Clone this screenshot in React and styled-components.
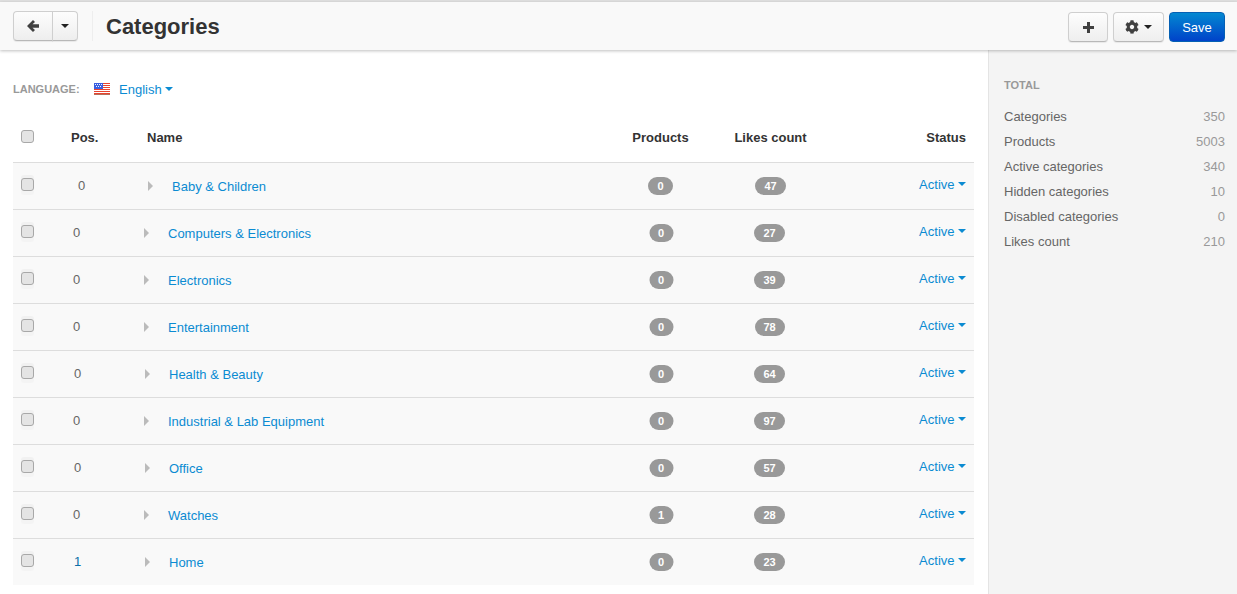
import React from "react";
import styled, { createGlobalStyle } from "styled-components";
import { FaCog } from "react-icons/fa";

const GlobalStyle = createGlobalStyle`
  html, body {
    margin: 0;
    height: 100%;
    overflow: hidden;
    background: #fff;
    font-family: "Liberation Sans", Arial, sans-serif;
    font-size: 13px;
    color: #333;
  }
`;

const Page = styled.div`
  display: flex;
  flex-direction: column;
  height: 594px;
  border-top: 2px solid #e0e0e0;
  box-sizing: border-box;
`;

const Toolbar = styled.header`
  position: relative;
  z-index: 1;
  flex: none;
  display: flex;
  align-items: center;
  height: 48px;
  box-sizing: border-box;
  padding: 0 12px 0 13px;
  background: #f9f9f9;
  box-shadow: 0 1px 3px rgba(0, 0, 0, 0.25);
`;

const BtnGroup = styled.div`
  display: flex;
`;

const Actions = styled.div`
  display: flex;
  margin-top: 2px;
`;

const Btn = styled.button`
  display: flex;
  align-items: center;
  justify-content: center;
  gap: ${({ $iconGap }) => $iconGap || 0}px;
  box-sizing: border-box;
  width: ${({ $width }) => $width}px;
  height: 30px;
  margin-left: ${({ $gap }) => $gap || 0}px;
  padding: 0;
  border: 1px solid #cfcfcf;
  border-bottom-color: #b8b8b8;
  border-radius: ${({ $radius }) => $radius || "4px"};
  background: linear-gradient(to bottom, #fdfdfd, #eeeeee);
  box-shadow: 0 1px 1px rgba(0, 0, 0, 0.07);
  color: #404040;
`;

const SaveBtn = styled.button`
  box-sizing: border-box;
  width: 56px;
  height: 30px;
  margin-left: 5px;
  padding: 0;
  border: 1px solid #0560b4;
  border-radius: 4px;
  background: linear-gradient(to bottom, #0388d1, #0042c9);
  color: #fff;
  font: 13px "Liberation Sans", Arial, sans-serif;
`;

const Caret = styled.span`
  display: inline-block;
  width: 0;
  height: 0;
  border-left: 4px solid transparent;
  border-right: 4px solid transparent;
  border-top: 4px solid ${({ $color }) => $color || "#222"};
`;

const TitleWrap = styled.div`
  flex: 1;
  margin-left: 14px;
  padding-left: 13px;
  border-left: 1px solid #eeeeee;
  height: 30px;
  display: flex;
  align-items: center;
`;

const Title = styled.h1`
  margin: 2px 0 0;
  font-size: 22px;
  font-weight: 700;
  color: #333;
`;

const Body = styled.div`
  flex: 1;
  display: flex;
  min-height: 0;
`;

const Main = styled.main`
  flex: 1;
  min-width: 0;
  padding: 0 14px 0 13px;
`;

const LangBar = styled.div`
  display: flex;
  align-items: center;
  height: 18px;
  margin-top: 30px;
`;

const LangLabel = styled.span`
  width: 81px;
  font-size: 11px;
  font-weight: 700;
  color: #999;
`;

const LangLink = styled.a`
  display: flex;
  align-items: center;
  color: #0b8bd2;
`;

const FlagIcon = styled.svg`
  margin-right: 9px;
`;

const CaretGap = styled.span`
  display: flex;
  margin-left: 3px;
`;

const Table = styled.div`
  margin-top: 16px;
`;

const grid = `
  display: grid;
  grid-template-columns: 50px 72px 485px 81px 139px 134px;
  box-sizing: border-box;
`;

const HeadRow = styled.div`
  ${grid}
  height: 49px;
  padding-bottom: 2px;
  align-items: center;
  border-bottom: 1px solid #ddd;
  font-weight: 700;
  color: #333;
`;

const Row = styled.div`
  ${grid}
  height: ${({ $last }) => ($last ? 46 : 47)}px;
  align-items: center;
  background: #f9f9f9;
  border-bottom: ${({ $last }) => ($last ? "none" : "1px solid #ddd")};
`;

const CheckCell = styled.div`
  display: flex;
  padding-left: 8px;
`;

const Check = styled.input.attrs({ type: "checkbox" })`
  appearance: none;
  box-sizing: border-box;
  width: 13px;
  height: 13px;
  margin: 0 0 ${({ $halo }) => ($halo ? 3 : 1)}px;
  border: 1px solid #a8a8a8;
  border-radius: 3px;
  background: #e4e4e4;
  box-shadow: ${({ $halo }) => ($halo ? "0 -3px 0 #f1f1f1, 0 4px 0 #f4f4f4" : "none")};
`;

const HeadPos = styled.div`
  padding-left: 8px;
`;

const PosCell = styled.div`
  padding-left: ${({ $pad }) => $pad}px;
  padding-bottom: 1px;
  color: #666;
`;

const PosLink = styled.a`
  color: #0b6fa8;
`;

const HeadName = styled.div`
  padding-left: 12px;
`;

const NameCell = styled.div`
  display: flex;
  align-items: center;
  padding-left: ${({ $pad }) => $pad}px;
  padding-top: 1px;
`;

const Arrow = styled.span`
  width: 0;
  height: 0;
  margin-right: 19px;
  margin-bottom: 1px;
  border-top: 5px solid transparent;
  border-bottom: 5px solid transparent;
  border-left: 5px solid #bbb;
`;

const NameLink = styled.a`
  color: #0b8bd2;
`;

const Center = styled.div`
  display: flex;
  justify-content: center;
`;

const Badge = styled.span`
  box-sizing: border-box;
  width: ${({ $width }) => $width}px;
  height: 18px;
  line-height: 18px;
  border-radius: 9px;
  background: #999;
  color: #fff;
  font-size: 11px;
  font-weight: 700;
  text-align: center;
  transform: translateX(${({ $shift }) => $shift || 0}px);
`;

const HeadStatus = styled.div`
  padding-right: 8px;
  text-align: right;
`;

const StatusCell = styled.div`
  display: flex;
  align-items: center;
  justify-content: flex-end;
  gap: 3.5px;
  padding: 0 8px 4px 0;
  color: #0b8bd2;
`;

const Sidebar = styled.aside`
  flex: none;
  width: 249px;
  box-sizing: border-box;
  padding: 29px 12px 0 15px;
  background: #f4f4f4;
  border-left: 1px solid #e4e4e4;
`;

const SideTitle = styled.h4`
  margin: 0 0 12px;
  font-size: 11px;
  line-height: 13px;
  font-weight: 700;
  color: #999;
`;

const Stat = styled.div`
  display: flex;
  justify-content: space-between;
  height: 25px;
  line-height: 25px;
  color: #666;
`;

const StatValue = styled.span`
  color: #999;
`;

const rows = [
  { name: "Baby & Children", pos: "0", posPad: 15, arrowPad: 13, products: "0", likes: "47", pWidth: 25, pShift: 0, lWidth: 31, lShift: 0 },
  { name: "Computers & Electronics", pos: "0", posPad: 10, arrowPad: 9, products: "0", likes: "27", pWidth: 24, pShift: 0.5, lWidth: 31, lShift: -1 },
  { name: "Electronics", pos: "0", posPad: 10, arrowPad: 9, products: "0", likes: "39", pWidth: 24, pShift: 0.5, lWidth: 31, lShift: -1 },
  { name: "Entertainment", pos: "0", posPad: 10, arrowPad: 9, products: "0", likes: "78", pWidth: 24, pShift: 0.5, lWidth: 30, lShift: -1 },
  { name: "Health & Beauty", pos: "0", posPad: 11, arrowPad: 10, products: "0", likes: "64", pWidth: 24, pShift: 0.5, lWidth: 31, lShift: -1 },
  { name: "Industrial & Lab Equipment", pos: "0", posPad: 10, arrowPad: 9, products: "0", likes: "97", pWidth: 24, pShift: 0.5, lWidth: 31, lShift: -1 },
  { name: "Office", pos: "0", posPad: 11, arrowPad: 10, products: "0", likes: "57", pWidth: 24, pShift: 0.5, lWidth: 31, lShift: -1 },
  { name: "Watches", pos: "0", posPad: 10, arrowPad: 9, products: "1", likes: "28", pWidth: 24, pShift: 0.5, lWidth: 31, lShift: -1 },
  { name: "Home", pos: "1", posPad: 11, arrowPad: 10, products: "0", likes: "23", pWidth: 24, pShift: 0.5, lWidth: 31, lShift: -1, link: true },
];

const stats = [
  ["Categories", "350"],
  ["Products", "5003"],
  ["Active categories", "340"],
  ["Hidden categories", "10"],
  ["Disabled categories", "0"],
  ["Likes count", "210"],
];

const BackIcon = () => (
  <svg width="12" height="12" viewBox="0 0 12 12" fill="#404040">
    <polygon points="0,6 6,0 8,2 5.5,4.3 12,4.3 12,7.7 5.5,7.7 8,10 6,12" />
  </svg>
);

const PlusIcon = () => (
  <svg width="11" height="11" viewBox="0 0 11 11" fill="#404040">
    <polygon points="4,0 7,0 7,4 11,4 11,7 7,7 7,11 4,11 4,7 0,7 0,4 4,4" />
  </svg>
);

const UsFlag = () => (
  <FlagIcon width="16" height="12" viewBox="0 0 16 12">
    <rect width="16" height="12" fill="#fff" />
    {[0, 2, 4, 6, 8, 10].map((y) => (
      <rect key={y} y={y} width="16" height="1" fill="#e8432f" />
    ))}
    <rect y="11" width="16" height="1" fill="#b8705a" />
    <rect width="9" height="6" fill="#3a5fe0" />
    {[1, 3, 5, 7].map((x) => (
      <rect key={x} x={x} y="1" width="1" height="1" fill="#f0f4ff" />
    ))}
    {[2, 4, 6].map((x) => (
      <rect key={x} x={x} y="3" width="1" height="1" fill="#f0f4ff" />
    ))}
  </FlagIcon>
);

const App = () => (
  <>
    <GlobalStyle />
    <Page>
      <Toolbar>
        <BtnGroup>
          <Btn $width={40} $radius="4px 0 0 4px"><BackIcon /></Btn>
          <Btn $width={26} $gap={-1} $radius="0 4px 4px 0"><Caret /></Btn>
        </BtnGroup>
        <TitleWrap><Title>Categories</Title></TitleWrap>
        <Actions>
          <Btn $width={40}><PlusIcon /></Btn>
          <Btn $width={51} $gap={5} $iconGap={5}><FaCog size={14} /><Caret /></Btn>
          <SaveBtn>Save</SaveBtn>
        </Actions>
      </Toolbar>
      <Body>
        <Main>
          <LangBar>
            <LangLabel>LANGUAGE:</LangLabel>
            <LangLink>
              <UsFlag />
              English
              <CaretGap><Caret $color="#0b8bd2" /></CaretGap>
            </LangLink>
          </LangBar>
          <Table>
            <HeadRow>
              <CheckCell><Check /></CheckCell>
              <HeadPos>Pos.</HeadPos>
              <HeadName>Name</HeadName>
              <Center>Products</Center>
              <Center>Likes count</Center>
              <HeadStatus>Status</HeadStatus>
            </HeadRow>
            {rows.map((r, i) => (
              <Row key={r.name} $last={i === rows.length - 1}>
                <CheckCell><Check $halo /></CheckCell>
                <PosCell $pad={r.posPad}>{r.link ? <PosLink>{r.pos}</PosLink> : r.pos}</PosCell>
                <NameCell $pad={r.arrowPad}>
                  <Arrow />
                  <NameLink>{r.name}</NameLink>
                </NameCell>
                <Center><Badge $width={r.pWidth} $shift={r.pShift}>{r.products}</Badge></Center>
                <Center><Badge $width={r.lWidth} $shift={r.lShift}>{r.likes}</Badge></Center>
                <StatusCell>Active<Caret $color="#0b8bd2" /></StatusCell>
              </Row>
            ))}
          </Table>
        </Main>
        <Sidebar>
          <SideTitle>TOTAL</SideTitle>
          {stats.map(([label, value]) => (
            <Stat key={label}>
              <span>{label}</span>
              <StatValue>{value}</StatValue>
            </Stat>
          ))}
        </Sidebar>
      </Body>
    </Page>
  </>
);

export default App;
